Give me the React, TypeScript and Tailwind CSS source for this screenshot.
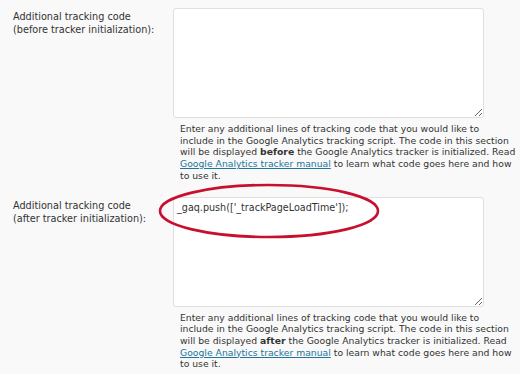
import React from "react";

const font = { fontFamily: '"DejaVu Sans", Verdana, sans-serif' };

function Field({
  label,
  when,
  value,
}: {
  label: string[];
  when: string;
  value?: string;
}) {
  return (
    <div className="flex">
      <div className="w-[173px] shrink-0 pl-[13px] pt-[2px] text-[9.7px] leading-[13px] text-[#333]">
        {label.map((l) => (
          <div key={l}>{l}</div>
        ))}
      </div>
      <div className="w-[345px]">
        <textarea
          defaultValue={value}
          spellCheck={false}
          className="block h-[110px] w-[311px] resize rounded-[3px] border border-[#dfdfdf] bg-white px-[3px] pt-[4px] text-[9.6px] leading-[12px] text-[#333] outline-none"
          style={font}
        />
        <p className="mt-[5px] whitespace-nowrap pl-[7px] text-[9.25px] leading-[11.7px] text-[#333]">
          Enter any additional lines of tracking code that you would like to
          <br />
          include in the Google Analytics tracking script. The code in this section
          <br />
          will be displayed <b>{when}</b> the Google Analytics tracker is initialized. Read
          <br />
          <a href="#" className="text-[#21759b] underline">
            Google Analytics tracker manual
          </a>{" "}
          to learn what code goes here and how
          <br />
          to use it.
        </p>
      </div>
    </div>
  );
}

export default function App() {
  return (
    <div
      className="relative h-[374px] w-[520px] overflow-hidden bg-[#f9f9f9] pt-[8px]"
      style={font}
    >
      <Field
        label={["Additional tracking code", "(before tracker initialization):"]}
        when="before"
      />
      <div className="mt-[15px]">
        <Field
          label={["Additional tracking code", "(after tracker initialization):"]}
          when="after"
          value="_gaq.push(['_trackPageLoadTime']);"
        />
      </div>
      <svg
        className="pointer-events-none absolute left-[156px] top-[182px]"
        width="226"
        height="58"
        viewBox="0 0 226 58"
      >
        <ellipse
          cx="113"
          cy="29"
          rx="109"
          ry="26"
          fill="none"
          stroke="#c8102e"
          strokeWidth="2.6"
        />
      </svg>
    </div>
  );
}
